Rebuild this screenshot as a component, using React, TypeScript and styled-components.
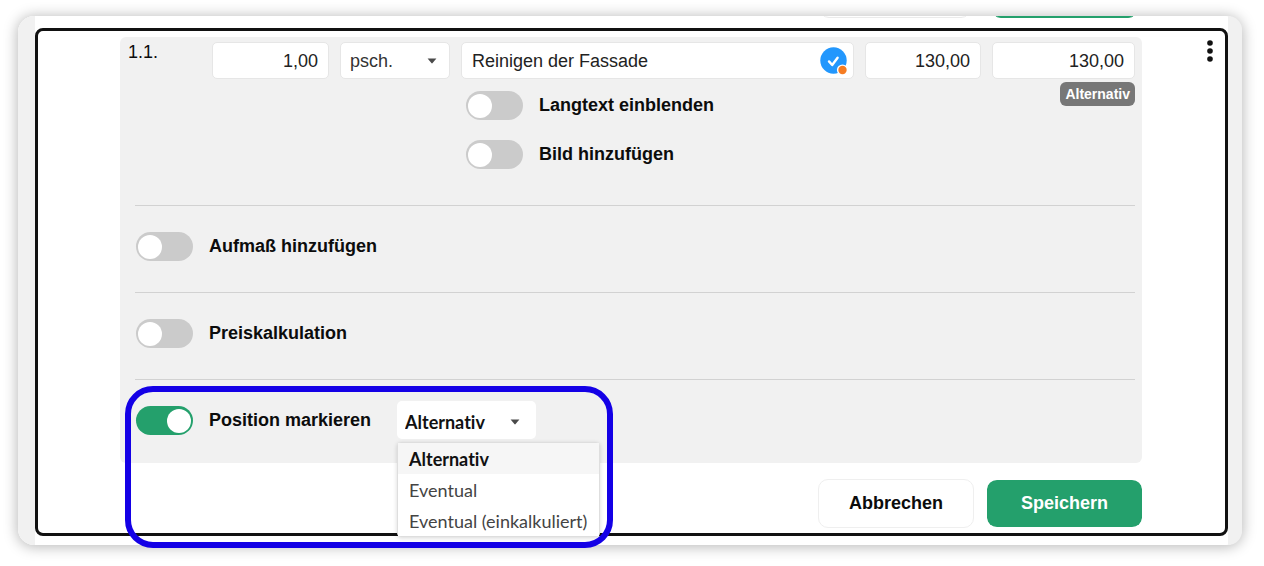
import React, { useId, useState } from "react";
import styled, { createGlobalStyle, css } from "styled-components";

const sans = `"Liberation Sans", Arial, Helvetica, sans-serif`;
const lato = `Lato, "Liberation Sans", sans-serif`;
const green = "#24a06c";
const grey = "#f1f1f1";

const GlobalStyle = createGlobalStyle`
  *, *::before, *::after { box-sizing: border-box; }
  body {
    margin: 0;
    background: #fff;
    color: #0c0c0c;
    font-family: ${sans};
    font-size: 18px;
    line-height: 24px;
  }
  button, input, select { font: inherit; color: inherit; }
`;

const Page = styled.div`
  padding: 16px 22px 20px 18px;
`;

const Sheet = styled.div`
  display: flex;
  background: #fff;
  border-radius: 16px;
  box-shadow: 0 1px 14px 1px rgba(0, 0, 0, 0.28);
`;

const Gutter = styled.div<{ $side: "left" | "right" }>`
  flex: none;
  width: ${(p) => (p.$side === "left" ? 17 : 14)}px;
  background: ${grey};
  border-radius: ${(p) => (p.$side === "left" ? "16px 0 0 16px" : "0 16px 16px 0")};
`;

const Content = styled.main`
  flex: 1;
  min-width: 0;
  padding-bottom: 9px;
`;

const PreviousActions = styled.div`
  display: flex;
  justify-content: flex-end;
  align-items: flex-end;
  gap: 20px;
  height: 12px;
  padding: 0 90px 10px 0;
  overflow: hidden;
`;

const PreviousEdge = styled.div<{ $primary?: boolean }>`
  flex: none;
  width: ${(p) => (p.$primary ? 147 : 152)}px;
  height: 40px;
  border-radius: 10px;
  border: 1px solid ${(p) => (p.$primary ? green : "#ebebeb")};
  background: ${(p) => (p.$primary ? green : "#fff")};
`;

const Frame = styled.section`
  display: grid;
  grid-template-columns: 82px minmax(0, 1fr) 83px;
  padding: 6px 0 5px;
  border: 3px solid #111;
  border-radius: 8px;
`;

const Column = styled.div`
  grid-column: 2;
`;

const Panel = styled.div`
  padding: 5px 7px 0 8px;
  border-radius: 6px;
  background: ${grey};
`;

const ItemRow = styled.div`
  display: grid;
  grid-template-columns: 73px 117px 110px minmax(0, 1fr) 116px 143px;
  column-gap: 11px;
  align-items: start;
  padding-bottom: 36px;
`;

const ItemNumber = styled.div`
  line-height: 20px;
`;

const Box = styled.div`
  position: relative;
  display: flex;
  align-items: center;
  height: 37px;
  padding-right: 5px;
  border: 1px solid #e6e6e6;
  border-radius: 5px;
  background: #fff;
`;

const TextInput = styled.input<{ $numeric?: boolean }>`
  flex: 1;
  min-width: 0;
  width: 100%;
  height: 100%;
  padding: 2px 5px 0 10px;
  border: 0;
  outline: 0;
  background: transparent;
  color: #222;
  text-align: ${(p) => (p.$numeric ? "right" : "left")};
`;

const SelectWrap = styled.div<{ $plain?: boolean }>`
  position: relative;
  display: grid;
  align-items: center;
  height: ${(p) => (p.$plain ? 38 : 37)}px;
  border: ${(p) => (p.$plain ? "0" : "1px solid #e6e6e6")};
  border-radius: 5px;
  background: #fff;
  > * { grid-area: 1 / 1; }
  > svg {
    justify-self: end;
    margin-top: ${(p) => (p.$plain ? 4 : 0)}px;
    margin-right: ${(p) => (p.$plain ? 16 : 12)}px;
    pointer-events: none;
  }
`;

const Select = styled.select<{ $plain?: boolean }>`
  appearance: none;
  width: 100%;
  height: 100%;
  border: 0;
  outline: 0;
  background: transparent;
  padding: 0 30px 0 9px;
  color: #333;
  ${(p) =>
    p.$plain &&
    css`
      padding: 4px 30px 0 8px;
      font-family: ${lato};
      font-variant-ligatures: none;
      font-weight: 700;
      color: #111;
    `}
`;

const Extras = styled.div`
  display: flex;
  flex-direction: column;
  gap: 20px;
  padding: 12px 0 0 5px;
`;

const Tag = styled.span`
  display: block;
  width: max-content;
  margin: 3px 0 0 auto;
  padding: 0 5px;
  border-radius: 6px;
  background: #777;
  color: #fff;
  font-size: 14px;
  font-weight: 700;
  line-height: 24px;
`;

const SwitchLabel = styled.label`
  display: flex;
  align-items: center;
  gap: 16px;
  height: 29px;
  font-weight: 700;
  cursor: pointer;
`;

const SwitchText = styled.span`
  padding-bottom: 2px;
`;

const SwitchInput = styled.input`
  appearance: none;
  flex: none;
  display: flex;
  align-items: center;
  width: 57px;
  height: 29px;
  margin: 0;
  padding: 0 2px;
  border-radius: 15px;
  background: #cbcbcb;
  cursor: pointer;
  &::before {
    content: "";
    width: 24px;
    height: 24px;
    border-radius: 50%;
    background: #fff;
  }
  &:checked {
    justify-content: flex-end;
    background: ${green};
  }
`;

const OptionSection = styled.div`
  position: relative;
  display: flex;
  align-items: center;
  gap: 26px;
  height: 87px;
  margin-left: 7px;
  padding: 0 0 5px 1px;
  border-top: 1px solid #d2d2d2;
  &:last-child { height: 84px; padding-bottom: 2px; }
`;

const MarkSelect = styled.div`
  position: relative;
  width: 139px;
  margin-bottom: 2px;
`;

const Menu = styled.ul`
  position: absolute;
  top: 100%;
  left: 0;
  z-index: 1;
  width: max-content;
  min-width: 203px;
  margin: 3px 0 0;
  padding: 0;
  list-style: none;
  border: 1px solid #dedede;
  border-radius: 4px;
  background: #fff;
  box-shadow: 0 1px 4px rgba(0, 0, 0, 0.16);
`;

const MenuItem = styled.button<{ $selected: boolean }>`
  display: block;
  width: 100%;
  padding: 4px 11px 3px;
  border: 0;
  background: ${(p) => (p.$selected ? "#f6f6f6" : "#fff")};
  color: ${(p) => (p.$selected ? "#111" : "#444")};
  font-family: ${lato};
  font-variant-ligatures: none;
  font-weight: ${(p) => (p.$selected ? 700 : 400)};
  text-align: left;
`;

const Highlight = styled.div`
  position: absolute;
  top: 6px;
  left: -10px;
  z-index: 2;
  width: 488px;
  height: 162px;
  border: 6px solid #1400e6;
  border-radius: 28px;
  pointer-events: none;
`;

const Actions = styled.div`
  display: flex;
  justify-content: flex-end;
  gap: 13px;
  padding-top: 16px;
`;

const ActionButton = styled.button<{ $primary?: boolean }>`
  width: ${(p) => (p.$primary ? 155 : 156)}px;
  height: 49px;
  padding: 0 0 2px;
  border: 1px solid ${(p) => (p.$primary ? "transparent" : "#efefef")};
  border-width: ${(p) => (p.$primary ? "1px 0" : "1px")};
  border-radius: 10px;
  background: ${(p) => (p.$primary ? green : "#fff")};
  background-clip: padding-box;
  color: ${(p) => (p.$primary ? "#fff" : "#0c0c0c")};
  font-weight: 700;
`;

const MoreButton = styled.button`
  grid-column: 3;
  justify-self: end;
  align-self: start;
  display: flex;
  margin-right: 9px;
  padding: 2px 3px;
  border: 0;
  background: transparent;
`;

function Caret() {
  return (
    <svg width="10" height="6" viewBox="0 0 10 6" aria-hidden="true">
      <path d="M0.6 0.4h8.8L5.6 5.1a0.8 0.8 0 0 1-1.2 0z" fill="#4a4a4a" />
    </svg>
  );
}

function VerifiedIcon() {
  return (
    <svg width="28" height="28" viewBox="0 0 28 28" aria-hidden="true">
      <circle cx="13.5" cy="13.5" r="13.2" fill="#2297fd" />
      <path d="M9 14.4l3.2 3.6 5.4-7.2" fill="none" stroke="#fff" strokeWidth="2.4" strokeLinecap="round" strokeLinejoin="round" />
      <circle cx="22.5" cy="23" r="5.6" fill="#fff" />
      <circle cx="22.5" cy="23" r="4.2" fill="#f57c22" />
    </svg>
  );
}

function Switch({ label, on = false }: { label: string; on?: boolean }) {
  const id = useId();
  return (
    <SwitchLabel htmlFor={id}>
      <SwitchInput id={id} type="checkbox" role="switch" defaultChecked={on} />
      <SwitchText>{label}</SwitchText>
    </SwitchLabel>
  );
}

const marks = ["Alternativ", "Eventual", "Eventual (einkalkuliert)"];

export default function App() {
  const [mark, setMark] = useState(marks[0]);
  return (
    <>
      <GlobalStyle />
      <Page>
        <Sheet>
          <Gutter $side="left" />
          <Content>
            <PreviousActions>
              <PreviousEdge />
              <PreviousEdge $primary />
            </PreviousActions>
            <Frame>
              <Column>
                <Panel>
                  <ItemRow>
                    <ItemNumber>1.1.</ItemNumber>
                    <Box>
                      <TextInput $numeric aria-label="Menge" defaultValue="1,00" />
                    </Box>
                    <SelectWrap>
                      <Select aria-label="Einheit" defaultValue="psch.">
                        <option>psch.</option>
                      </Select>
                      <Caret />
                    </SelectWrap>
                    <div>
                      <Box>
                        <TextInput aria-label="Bezeichnung" defaultValue="Reinigen der Fassade" />
                        <VerifiedIcon />
                      </Box>
                      <Extras>
                        <Switch label="Langtext einblenden" />
                        <Switch label="Bild hinzufügen" />
                      </Extras>
                    </div>
                    <Box>
                      <TextInput $numeric aria-label="Einzelpreis" defaultValue="130,00" />
                    </Box>
                    <div>
                      <Box>
                        <TextInput $numeric aria-label="Gesamtpreis" defaultValue="130,00" />
                      </Box>
                      <Tag>{mark}</Tag>
                    </div>
                  </ItemRow>
                  <OptionSection>
                    <Switch label="Aufmaß hinzufügen" />
                  </OptionSection>
                  <OptionSection>
                    <Switch label="Preiskalkulation" />
                  </OptionSection>
                  <OptionSection>
                    <Switch label="Position markieren" on />
                    <MarkSelect>
                      <SelectWrap $plain>
                        <Select
                          $plain
                          aria-label="Markierung"
                          value={mark}
                          onChange={(e) => setMark(e.target.value)}
                        >
                          {marks.map((m) => (
                            <option key={m}>{m}</option>
                          ))}
                        </Select>
                        <Caret />
                      </SelectWrap>
                      <Menu>
                        {marks.map((m) => (
                          <li key={m}>
                            <MenuItem type="button" $selected={m === mark} onClick={() => setMark(m)}>
                              {m}
                            </MenuItem>
                          </li>
                        ))}
                      </Menu>
                    </MarkSelect>
                    <Highlight />
                  </OptionSection>
                </Panel>
                <Actions>
                  <ActionButton type="button">Abbrechen</ActionButton>
                  <ActionButton type="button" $primary>
                    Speichern
                  </ActionButton>
                </Actions>
              </Column>
              <MoreButton type="button" aria-label="Mehr">
                <svg width="6" height="24" viewBox="0 0 6 24" aria-hidden="true">
                  <circle cx="3" cy="4" r="2.8" fill="#111" />
                  <circle cx="3" cy="12" r="2.8" fill="#111" />
                  <circle cx="3" cy="20" r="2.8" fill="#111" />
                </svg>
              </MoreButton>
            </Frame>
          </Content>
          <Gutter $side="right" />
        </Sheet>
      </Page>
    </>
  );
}
